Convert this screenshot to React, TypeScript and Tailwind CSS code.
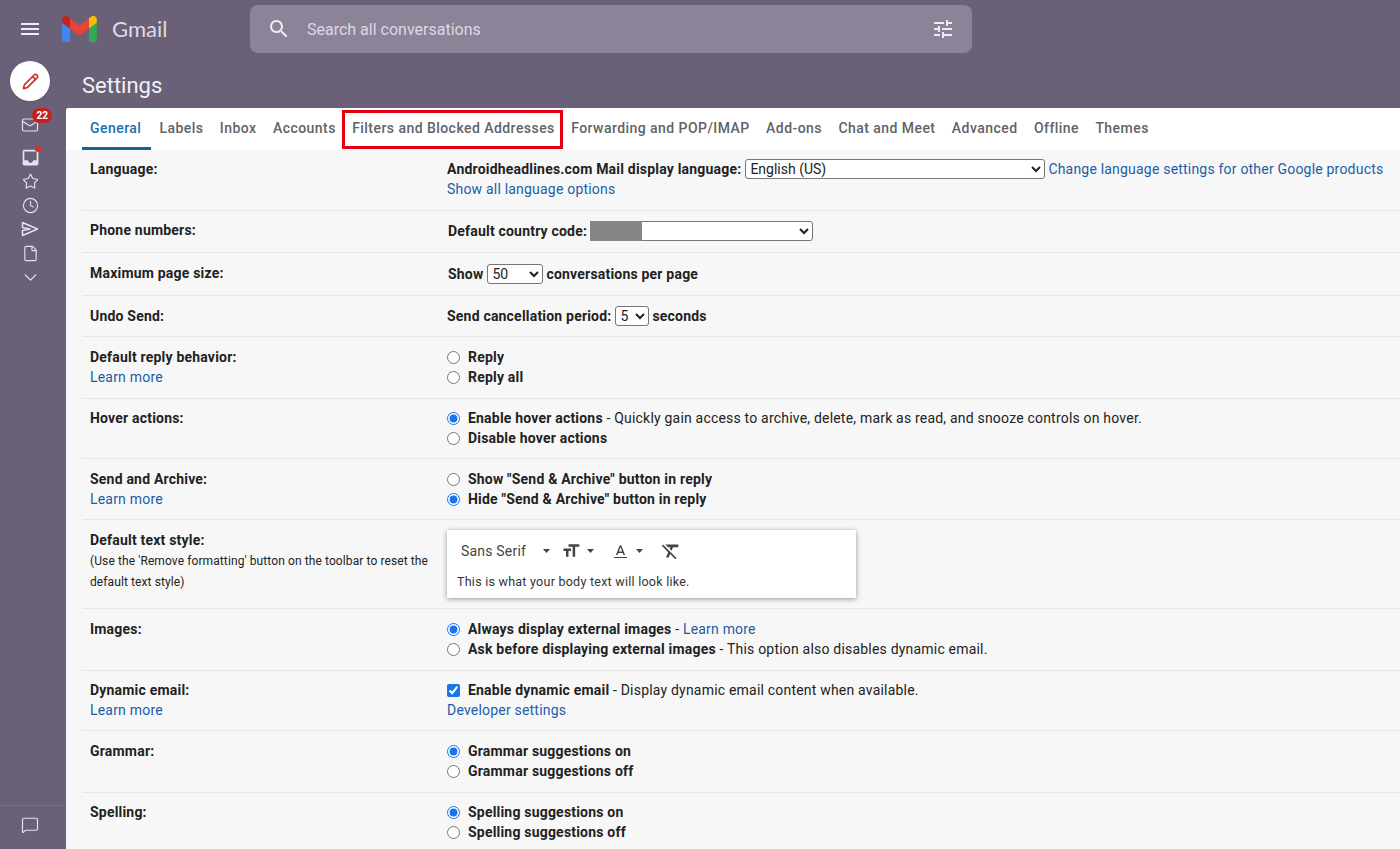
import React from "react";
import { Mail, Star, Clock, File, ChevronDown, MessageSquare, Pencil } from "lucide-react";

const Mat = ({ d, size = 24, className = "" }: { d: string; size?: number; className?: string }) => (
  <svg width={size} height={size} viewBox="0 0 24 24" fill="currentColor" className={className}>
    <path d={d} />
  </svg>
);

const Caret = () => (
  <svg width="7" height="4" viewBox="0 0 7 4" fill="#444" className="block"><path d="M0 0h7L3.5 4z" /></svg>
);

const A = ({ children }: { children: React.ReactNode }) => <span className="text-[#1a5da8]">{children}</span>;
const B = ({ children }: { children: React.ReactNode }) => <span className="font-bold">{children}</span>;

const Radio = ({ checked = false, name, children }: { checked?: boolean; name: string; children: React.ReactNode }) => (
  <label className="flex items-center h-5 gap-2">
    <input type="radio" name={name} defaultChecked={checked} className="w-[13px] h-[13px] accent-[#1a73e8]" />
    <span>{children}</span>
  </label>
);

const Row = ({
  h,
  pt,
  label,
  more,
  children,
  last,
}: {
  h: string;
  pt: string;
  label: React.ReactNode;
  more?: boolean;
  children: React.ReactNode;
  last?: boolean;
}) => (
  <div className={`flex ml-4 pl-2 ${h} ${pt} ${last ? "" : "border-b border-[#e6e6e6]"}`}>
    <div className="w-[357px] shrink-0">
      <div className="font-bold leading-5">{label}</div>
      {more && <div className="leading-5"><A>Learn more</A></div>}
    </div>
    <div className="flex-1 leading-5 whitespace-nowrap">{children}</div>
  </div>
);

const sideIcon = "h-6 flex items-center justify-center text-[#e6e1ea]";

const Sel = ({ className, options }: { className: string; options: string[] }) => (
  <select className={`h-5 bg-white border border-[#767676] rounded-[3px] text-[14px] text-[#222] tracking-normal font-normal ${className}`}>
    {options.map((o) => (
      <option key={o}>{o}</option>
    ))}
  </select>
);

export default function App() {
  return (
    <div className="h-[849px] w-[1400px] overflow-hidden bg-[#6a6179] flex flex-col [font-family:Roboto,sans-serif] text-[14px] tracking-[0.2px] text-[#222]">
      {/* top bar */}
      <header className="h-[57px] shrink-0 flex items-start">
        <div className="w-[60px] h-[57px] flex items-start justify-center pt-[17px] text-[#eee]">
          <Mat size={24} d="M3 18h18v-2H3v2zm0-5h18v-2H3v2zm0-7v2h18V6H3z" />
        </div>
        <div className="w-[190px] flex items-center gap-[15px] pl-[2px] pt-[16px]">
          <svg width="35" height="26" viewBox="52 42 88 66">
            <path fill="#4285f4" d="M58 108h14V74L52 59v43c0 3.32 2.69 6 6 6" />
            <path fill="#34a853" d="M120 108h14c3.32 0 6-2.69 6-6V59l-20 15" />
            <path fill="#fbbc04" d="M120 48v26l20-15v-8c0-7.42-8.47-11.65-14.4-7.2" />
            <path fill="#ea4335" d="M72 74V48l24 18 24-18v26L96 92" />
            <path fill="#c5221f" d="M52 51v8l20 15V48l-5.6-4.2c-5.94-4.45-14.4-.22-14.4 7.2" />
          </svg>
          <span className="text-[22px] leading-[26px] text-[#dedbe2] [font-family:Lato,sans-serif] tracking-normal">Gmail</span>
        </div>
        <div className="mt-[5px] w-[722px] h-12 rounded-lg bg-[#8b8398] flex items-center pl-[17px] pr-[17px] text-[#eeeaf2]">
          <Mat size={24} d="M15.5 14h-.79l-.28-.27C15.41 12.59 16 11.11 16 9.5 16 5.91 13.09 3 9.5 3S3 5.91 3 9.5 5.91 16 9.5 16c1.61 0 3.09-.59 4.23-1.57l.27.28v.79l5 4.99L20.49 19l-4.99-5zm-6 0C7.01 14 5 11.99 5 9.5S7.01 5 9.5 5 14 7.01 14 9.5 11.99 14 9.5 14z" />
          <span className="ml-4 flex-1 text-[16px] tracking-normal text-[#dcd8e0] pt-[2px]">Search all conversations</span>
          <Mat size={24} d="M3 17v2h6v-2H3zM3 5v2h10V5H3zm10 16v-2h8v-2h-8v-2h-2v6h2zM7 9v2H3v2h4v2h2V9H7zm14 4v-2H11v2h10zm-6-4h2V7h4V5h-4V3h-2v6z" />
        </div>
      </header>

      <div className="flex-1 flex min-h-0">
        {/* sidebar */}
        <aside className="w-[66px] shrink-0 flex flex-col pt-1">
          <div className="flex justify-center ml-[-6px]">
            <div className="w-10 h-10 rounded-full bg-white flex items-center justify-center shadow-sm">
              <Pencil size={17} strokeWidth={2.4} className="text-[#d3302f]" />
            </div>
          </div>
          <div className="flex flex-col ml-[-6px] mt-3">
            <div className={`${sideIcon} relative`}>
              <Mail size={18} strokeWidth={1.6} />
              <span className="absolute left-[38px] -top-[5px] h-[15px] px-[4.5px] rounded-full bg-[#c5221f] text-white text-[10px] leading-[15px] font-bold tracking-normal">22</span>
            </div>
            <div className={`${sideIcon} relative mt-2`}>
              <Mat size={21} d="M19 3H4.99c-1.11 0-1.98.89-1.98 2L3 19c0 1.1.88 2 1.99 2H19c1.1 0 2-.9 2-2V5c0-1.11-.9-2-2-2zm0 12h-4c0 1.66-1.35 3-3 3s-3-1.34-3-3H4.99V5H19v10z" />
              <span className="absolute left-[41px] top-[1px] w-[6px] h-[6px] rounded-full bg-[#d93025]" />
            </div>
            <div className={sideIcon}><Star size={17} strokeWidth={1.6} /></div>
            <div className={sideIcon}><Clock size={17} strokeWidth={1.6} /></div>
            <div className={sideIcon}>
              <svg width="18" height="16" viewBox="0 0 18 16" fill="none" stroke="currentColor" strokeWidth="1.5" strokeLinejoin="round">
                <path d="M1.5 1.5 16.5 8 1.5 14.5V9.5L9 8 1.5 6.5z" />
              </svg>
            </div>
            <div className={sideIcon}><File size={17} strokeWidth={1.6} /></div>
            <div className={sideIcon}><ChevronDown size={21} strokeWidth={1.5} /></div>
          </div>
          <div className="mt-auto border-t border-[#7a7288] h-[44px] flex justify-center ml-[-6px] pt-[10px] text-[#e6e1ea]">
            <MessageSquare size={18} strokeWidth={1.6} />
          </div>
        </aside>

        {/* main */}
        <main className="flex-1 min-w-0 flex flex-col">
          <h1 className="h-[51px] shrink-0 pl-4 pt-[14px] text-[22px] leading-[30px] text-[#f2f0f4] tracking-normal">Settings</h1>
          <div className="flex-1 bg-[#f7f7f7] rounded-tl-[3px] overflow-hidden">
            {/* tabs */}
            <nav className="relative h-[42px] bg-white flex pl-4 text-[#5f6368] font-medium tracking-[0.45px]">
              {["General", "Labels", "Inbox", "Accounts", "Filters and Blocked Addresses", "Forwarding and POP/IMAP", "Add-ons", "Chat and Meet", "Advanced", "Offline", "Themes"].map((t, i) => (
                <div
                  key={t}
                  className={`leading-[40px] h-[42px] whitespace-nowrap ${i === 0 ? "pl-2 pr-[10px] text-[#1a6fb0] border-b-[3px] border-[#14668f]" : "px-[8.2px]"}`}
                >
                  {t}
                </div>
              ))}
              <div className="absolute left-[276px] top-[2px] w-[221px] h-[39px] border-[3px] border-[#e3000f]" />
            </nav>

            <Row h="h-[61px]" pt="pt-[9px]" label="Language:">
              <div className="flex items-center">
                <B>Androidheadlines.com Mail display language:</B>
                <Sel className="w-[300px] ml-1" options={["English (US)"]} />
                <span className="ml-[3px]"><A>Change language settings for other Google products</A></span>
              </div>
              <A>Show all language options</A>
            </Row>
            <Row h="h-[42px]" pt="pt-[9px]" label="Phone numbers:">
              <div className="flex items-center ml-px mt-px">
                <B>Default country code:</B>
                <div className="relative ml-[3px]">
                  <Sel className="w-[223px] block" options={[" "]} />
                  <div className="absolute left-0 top-0 h-5 w-[52px] bg-[#858585]" />
                </div>
              </div>
            </Row>
            <Row h="h-[43px]" pt="pt-[10px]" label="Maximum page size:">
              <div className="flex items-center ml-px mt-px">
                <B>Show</B>
                <Sel className="w-[56px] ml-1 mr-[3px]" options={["50"]} />
                <B>conversations per page</B>
              </div>
            </Row>
            <Row h="h-[41px]" pt="pt-[10px]" label="Undo Send:">
              <div className="flex items-center">
                <B>Send cancellation period:</B>
                <Sel className="w-[34px] ml-1 mr-[3px]" options={["5"]} />
                <B>seconds</B>
              </div>
            </Row>
            <Row h="h-[62px]" pt="pt-[10px]" label="Default reply behavior:" more>
              <Radio name="reply"><B>Reply</B></Radio>
              <Radio name="reply"><B>Reply all</B></Radio>
            </Row>
            <Row h="h-[60px]" pt="pt-[9px]" label="Hover actions:">
              <Radio name="hover" checked><B>Enable hover actions</B> - Quickly gain access to archive, delete, mark as read, and snooze controls on hover.</Radio>
              <Radio name="hover"><B>Disable hover actions</B></Radio>
            </Row>
            <Row h="h-[61px]" pt="pt-[10px]" label="Send and Archive:" more>
              <Radio name="send"><B>Show "Send &amp; Archive" button in reply</B></Radio>
              <Radio name="send" checked><B>Hide "Send &amp; Archive" button in reply</B></Radio>
            </Row>
            <Row
              h="h-[89px]"
              pt="pt-[10px]"
              label={
                <>
                  Default text style:
                  <div className="font-normal text-[12px] tracking-[0.1px] leading-[20.5px] pt-px">
                    (Use the 'Remove formatting' button on the toolbar to reset the
                    <br />
                    default text style)
                  </div>
                </>
              }
            >
              <div className="w-[409px] h-[68px] bg-white shadow-[0_1px_5px_rgba(0,0,0,0.4)]">
                <div className="h-[41px] flex items-center pl-[14px] text-[#444] tracking-[0.2px]">
                  <span className="w-[82px]">Sans Serif</span>
                  <Caret />
                  <Mat size={20} className="ml-[11px]" d="M9 4v3h5v12h3V7h5V4H9zm-6 8h3v7h3v-7h3V9H3v3z" />
                  <span className="ml-[6px]"><Caret /></span>
                  <span className="ml-[20px] flex flex-col items-center w-[13px] text-[#444]">
                    <Mat size={17} d="M11 3L5.5 17h2.25l1.12-3h6.25l1.12 3h2.25L13 3h-2zm-1.38 9L12 5.67 14.38 12H9.62z" />
                    <span className="w-[13px] h-[1.5px] bg-[#444] -mt-[3px]" />
                  </span>
                  <span className="ml-[9px]"><Caret /></span>
                  <Mat size={22} className="ml-[17px]" d="M3.27 5L2 6.27l6.97 6.97L6.5 19h3l1.57-3.66L16.73 21 18 19.73 3.55 5.27 3.27 5zM6 5v.18L8.82 8h2.4l-.72 1.68 2.1 2.1L14.21 8H20V5H6z" />
                </div>
                <div className="pl-[10px] pt-px text-[12.5px] leading-5 text-[#333] tracking-[0.25px]">This is what your body text will look like.</div>
              </div>
            </Row>
            <Row h="h-[62px]" pt="pt-[10px]" label="Images:">
              <Radio name="img" checked><B>Always display external images</B> - <A>Learn more</A></Radio>
              <Radio name="img"><B>Ask before displaying external images</B> - This option also disables dynamic email.</Radio>
            </Row>
            <Row h="h-[60px]" pt="pt-[9px]" label="Dynamic email:" more>
              <label className="flex items-center h-5 gap-2">
                <input type="checkbox" defaultChecked className="w-[13px] h-[13px] accent-[#1a73e8]" />
                <span><B>Enable dynamic email</B> - Display dynamic email content when available.</span>
              </label>
              <A>Developer settings</A>
            </Row>
            <Row h="h-[62px]" pt="pt-[10px]" label="Grammar:">
              <Radio name="gr" checked><B>Grammar suggestions on</B></Radio>
              <Radio name="gr"><B>Grammar suggestions off</B></Radio>
            </Row>
            <Row h="h-[60px]" pt="pt-[9px]" label="Spelling:" last>
              <Radio name="sp" checked><B>Spelling suggestions on</B></Radio>
              <Radio name="sp"><B>Spelling suggestions off</B></Radio>
            </Row>
          </div>
        </main>
      </div>
    </div>
  );
}
